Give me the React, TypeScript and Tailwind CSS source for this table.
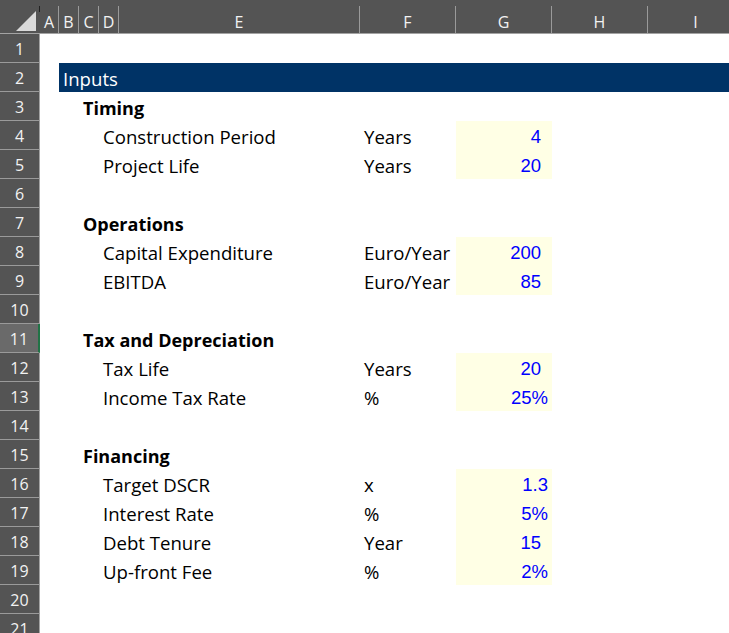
import React from "react";

type Row =
  | { t: "blank" }
  | { t: "band"; text: string }
  | { t: "head"; text: string }
  | { t: "item"; label: string; unit: string; value: string; pct?: boolean };

const cols = [
  { l: "A", w: "w-[19px]" },
  { l: "B", w: "w-[20px]" },
  { l: "C", w: "w-[20px]" },
  { l: "D", w: "w-[20px]" },
  { l: "E", w: "w-[241px]" },
  { l: "F", w: "w-[96px]" },
  { l: "G", w: "w-[96px]" },
  { l: "H", w: "w-[96px]" },
  { l: "I", w: "w-[96px]" },
];

const rows: Row[] = [
  { t: "blank" },
  { t: "band", text: "Inputs" },
  { t: "head", text: "Timing" },
  { t: "item", label: "Construction Period", unit: "Years", value: "4" },
  { t: "item", label: "Project Life", unit: "Years", value: "20" },
  { t: "blank" },
  { t: "head", text: "Operations" },
  { t: "item", label: "Capital Expenditure", unit: "Euro/Year", value: "200" },
  { t: "item", label: "EBITDA", unit: "Euro/Year", value: "85" },
  { t: "blank" },
  { t: "head", text: "Tax and Depreciation" },
  { t: "item", label: "Tax Life", unit: "Years", value: "20" },
  { t: "item", label: "Income Tax Rate", unit: "%", value: "25%", pct: true },
  { t: "blank" },
  { t: "head", text: "Financing" },
  { t: "item", label: "Target DSCR", unit: "x", value: "1.3", pct: true },
  { t: "item", label: "Interest Rate", unit: "%", value: "5%", pct: true },
  { t: "item", label: "Debt Tenure", unit: "Year", value: "15" },
  { t: "item", label: "Up-front Fee", unit: "%", value: "2%", pct: true },
  { t: "blank" },
  { t: "blank" },
];

const cellFont = "font-['Open_Sans','Noto_Sans',sans-serif] text-[18.6px]";
const headFont = "font-['Open_Sans','Noto_Sans',sans-serif] text-[18px]";
const numFont = "font-['Liberation_Sans',Arial,sans-serif] text-[18.5px]";
const hdrFont = "font-['Open_Sans','Noto_Sans',sans-serif] text-[16px]";

function RowContent({ r }: { r: Row }) {
  if (r.t === "band") {
    return (
      <div className="flex flex-1 h-full">
        <div className="w-[19px] shrink-0" />
        <div className={`flex-1 h-full bg-[#003366] text-white pl-[4px] flex items-center pt-[3px] ${cellFont}`}>
          {r.text}
        </div>
      </div>
    );
  }
  if (r.t === "head") {
    return (
      <div className="flex flex-1 h-full">
        <div className="w-[39px] shrink-0" />
        <div className={`pl-[4px] flex items-center pt-[3px] font-bold text-black whitespace-nowrap ${headFont}`}>
          {r.text}
        </div>
      </div>
    );
  }
  if (r.t === "item") {
    return (
      <div className="flex flex-1 h-full">
        <div className="w-[59px] shrink-0" />
        <div className={`w-[261px] shrink-0 pl-[4px] flex items-center pt-[3px] text-black whitespace-nowrap ${cellFont}`}>
          {r.label}
        </div>
        <div className={`w-[96px] shrink-0 pl-[4px] flex items-center pt-[3px] text-black whitespace-nowrap ${cellFont}`}>
          {r.unit}
        </div>
        <div
          className={`w-[96px] shrink-0 bg-[#ffffe5] flex items-center justify-end pt-[3px] text-[#0000ff] ${numFont} ${
            r.pct ? "pr-[4px]" : "pr-[11px]"
          }`}
        >
          {r.value}
        </div>
      </div>
    );
  }
  return <div className="flex-1 h-full" />;
}

export default function App() {
  return (
    <div className="w-[729px] h-[633px] overflow-hidden bg-white relative">
      {/* column header */}
      <div className="flex h-[34px] bg-[#545454] border-b border-[#a3a3a3] w-[780px]">
        <div className="w-[40px] shrink-0 h-full relative">
          <div className="absolute right-[4px] bottom-[2px] w-0 h-0 border-l-[20px] border-l-transparent border-b-[20px] border-b-[#dadada]" />
          <div className="absolute right-0 top-[6px] w-px h-[6px] bg-[#222]" />
        </div>
        {cols.map((c) => (
          <div key={c.l} className={`${c.w} shrink-0 h-full pt-[6px]`}>
            <div
              className={`h-full border-r border-[#9a9a9a] flex items-center justify-center pt-[4px] text-[#f2f2f2] ${hdrFont}`}
            >
              {c.l}
            </div>
          </div>
        ))}
      </div>
      {/* rows */}
      {rows.map((r, i) => {
        const sel = i === 10;
        return (
          <div key={i} className="flex h-[29px]">
            <div
              className={`w-[40px] shrink-0 h-full border-b border-[#9a9a9a] flex items-center justify-center pt-[2px] text-[#f2f2f2] ${hdrFont} ${
                sel ? "bg-[#6a6a6a] border-r-[2px] border-r-[#217346]" : "bg-[#545454] border-r border-r-[#a3a3a3]"
              }`}
            >
              {i + 1}
            </div>
            <RowContent r={r} />
          </div>
        );
      })}
    </div>
  );
}
